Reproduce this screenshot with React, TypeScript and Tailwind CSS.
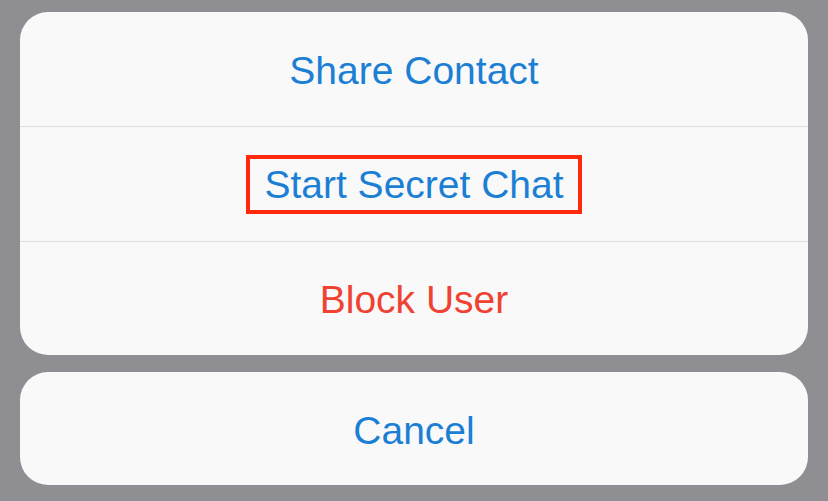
export default function App() {
  return (
    <div
      className="w-[828px] h-[501px] bg-[#8e8e93] px-5 pt-3 pb-4 flex flex-col gap-[17px]"
      style={{ fontFamily: '"Liberation Sans", Arial, sans-serif' }}
    >
      {/* Action list */}
      <div className="bg-[#f9f9f9] rounded-[28px] flex flex-col overflow-hidden">
        <button className="h-[114px] pt-[4px] flex items-center justify-center text-[39px] text-[#1b7fd4]">
          Share Contact
        </button>
        <div className="h-px bg-[#dedede]" />
        <button className="h-[114px] flex items-center justify-center text-[39px] text-[#1b7fd4]">
          <span className="h-[59px] px-[14px] pt-[3px] border-4 border-[#ff2a0e] flex items-center">
            Start Secret Chat
          </span>
        </button>
        <div className="h-px bg-[#dedede]" />
        <button className="h-[113px] pt-[3px] flex items-center justify-center text-[39px] text-[#ef4233]">
          Block User
        </button>
      </div>

      {/* Cancel */}
      <button className="h-[113px] pt-[5px] bg-[#f9f9f9] rounded-[28px] flex items-center justify-center text-[39px] text-[#1b7fd4]">
        Cancel
      </button>
    </div>
  )
}
